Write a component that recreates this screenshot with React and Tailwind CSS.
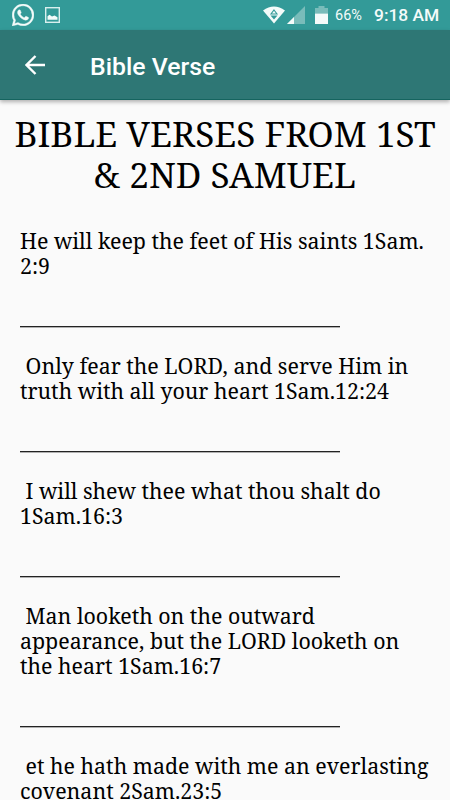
const verses = [
  ['He will keep the feet of His saints 1Sam.', '2:9'],
  [' Only fear the LORD, and serve Him in', 'truth with all your heart 1Sam.12:24'],
  [' I will shew thee what thou shalt do', '1Sam.16:3'],
  [' Man looketh on the outward', 'appearance, but the LORD looketh on', 'the heart 1Sam.16:7'],
  [' et he hath made with me an everlasting', 'covenant 2Sam.23:5'],
];

function WhatsAppIcon() {
  return (
    <svg width="22" height="22" viewBox="0 0 24 24" fill="#f4fbfa" stroke="#f4fbfa" strokeWidth=".4">
      <path d="M17.472 14.382c-.297-.149-1.758-.867-2.03-.967-.273-.099-.471-.148-.67.15-.197.297-.767.966-.94 1.164-.173.199-.347.223-.644.075-.297-.15-1.255-.463-2.39-1.475-.883-.788-1.48-1.761-1.653-2.059-.173-.297-.018-.458.13-.606.134-.133.298-.347.446-.52.149-.174.198-.298.298-.497.099-.198.05-.371-.025-.52-.075-.149-.669-1.612-.916-2.207-.242-.579-.487-.5-.669-.51-.173-.008-.371-.01-.57-.01-.198 0-.52.074-.792.372-.272.297-1.04 1.016-1.04 2.479 0 1.462 1.065 2.875 1.213 3.074.149.198 2.096 3.2 5.077 4.487.709.306 1.262.489 1.694.625.712.227 1.36.195 1.871.118.571-.085 1.758-.719 2.006-1.413.248-.694.248-1.289.173-1.413-.074-.124-.272-.198-.57-.347m-5.421 7.403h-.004a9.87 9.87 0 01-5.031-1.378l-.361-.214-3.741.982.998-3.648-.235-.374a9.86 9.86 0 01-1.51-5.26c.001-5.45 4.436-9.884 9.888-9.884 2.64 0 5.122 1.03 6.988 2.898a9.825 9.825 0 012.893 6.994c-.003 5.45-4.437 9.884-9.885 9.884m8.413-18.297A11.815 11.815 0 0012.05 0C5.495 0 .16 5.335.157 11.892c0 2.096.547 4.142 1.588 5.945L.057 24l6.305-1.654a11.882 11.882 0 005.683 1.448h.005c6.554 0 11.89-5.335 11.893-11.893a11.821 11.821 0 00-3.48-8.413z" />
    </svg>
  );
}

function StatusBar() {
  return (
    <div className="flex h-[30px] items-center bg-[#339a98] pl-3 font-[Roboto,sans-serif] text-[#f4fbfa]">
      <WhatsAppIcon />
      <svg className="ml-[11px]" width="15" height="16" viewBox="0 0 15 16">
        <rect x=".7" y=".7" width="13.6" height="14.6" fill="none" stroke="#d9efee" strokeWidth="1.4" />
        <path d="M2.5 12.8V9.2L4.5 7.8L7 9.5L9.5 8.5L12.5 10.2V12.8Z" fill="#f4fbfa" />
      </svg>
      <svg className="ml-[203px]" width="22" height="18" viewBox="0 0 22 18">
        <path d="M0 4.5Q11 -3.5 22 4.5L11 17.5Z" fill="#f4fbfa" />
        <path d="M11 4L14 8H8Z" fill="none" stroke="#339a98" strokeWidth="1.1" />
        <path d="M7.5 9.6H14.5L11 13.5Z" fill="#339a98" />
      </svg>
      <svg className="ml-[2px]" width="18" height="18" viewBox="0 0 18 18">
        <path d="M0 18L18 0V18Z" fill="#79bcba" />
        <path d="M0 18L7 11V18Z" fill="#f4fbfa" />
      </svg>
      <svg className="ml-[10px]" width="13" height="18" viewBox="0 0 13 18">
        <path d="M0 2H3.5V0H9.5V2H13V7.5H0Z" fill="#79bcba" />
        <rect y="7.5" width="13" height="10.5" fill="#f4fbfa" />
      </svg>
      <span className="ml-[7px] w-[28px] whitespace-nowrap pt-[2px] text-[14.5px] leading-none">66%</span>
      <span className="ml-[11px] whitespace-nowrap pt-[2px] text-[17.4px] font-medium leading-none">9:18 AM</span>
    </div>
  );
}

function Toolbar() {
  return (
    <header className="flex h-[70px] items-center border-b border-[#15645f] bg-[#2e7775] shadow-[0_2px_4px_rgba(0,0,0,0.3)]">
      <svg className="ml-[25px]" width="20" height="20" viewBox="0 0 20 20" fill="none" stroke="#fff" strokeWidth="2.4">
        <path d="M20 10H2M10.5 1L1.5 10L10.5 19" />
      </svg>
      <h1 className="ml-[45px] pt-[5px] font-[Roboto,sans-serif] text-[24.8px] font-medium leading-none text-white">Bible Verse</h1>
    </header>
  );
}

function Verse({ lines }) {
  return (
    <div>
      {lines.map((line) => (
        <p key={line} className="h-[25px] whitespace-pre leading-[25px]">{line}</p>
      ))}
      {/* Divider */}
      <div className="mt-[48px] mb-[25px] h-[2px] w-80 border-t border-[#222] bg-[#b0b0b0]" />
    </div>
  );
}

export default function App() {
  return (
    <div className="h-[800px] w-[450px] overflow-hidden bg-[#fafafa] text-black">
      <StatusBar />
      <Toolbar />
      <main className="font-['Noto_Serif',serif]">
        <h2 className="flex flex-col items-center whitespace-nowrap pt-[13px] text-[35.2px] leading-[41px]">
          <span>BIBLE VERSES FROM 1ST</span>
          <span>&amp; 2ND SAMUEL</span>
        </h2>
        <div className="px-5 pt-[33px] text-[21.35px]">
          {verses.map((lines) => (
            <Verse key={lines[0]} lines={lines} />
          ))}
        </div>
      </main>
    </div>
  );
}
